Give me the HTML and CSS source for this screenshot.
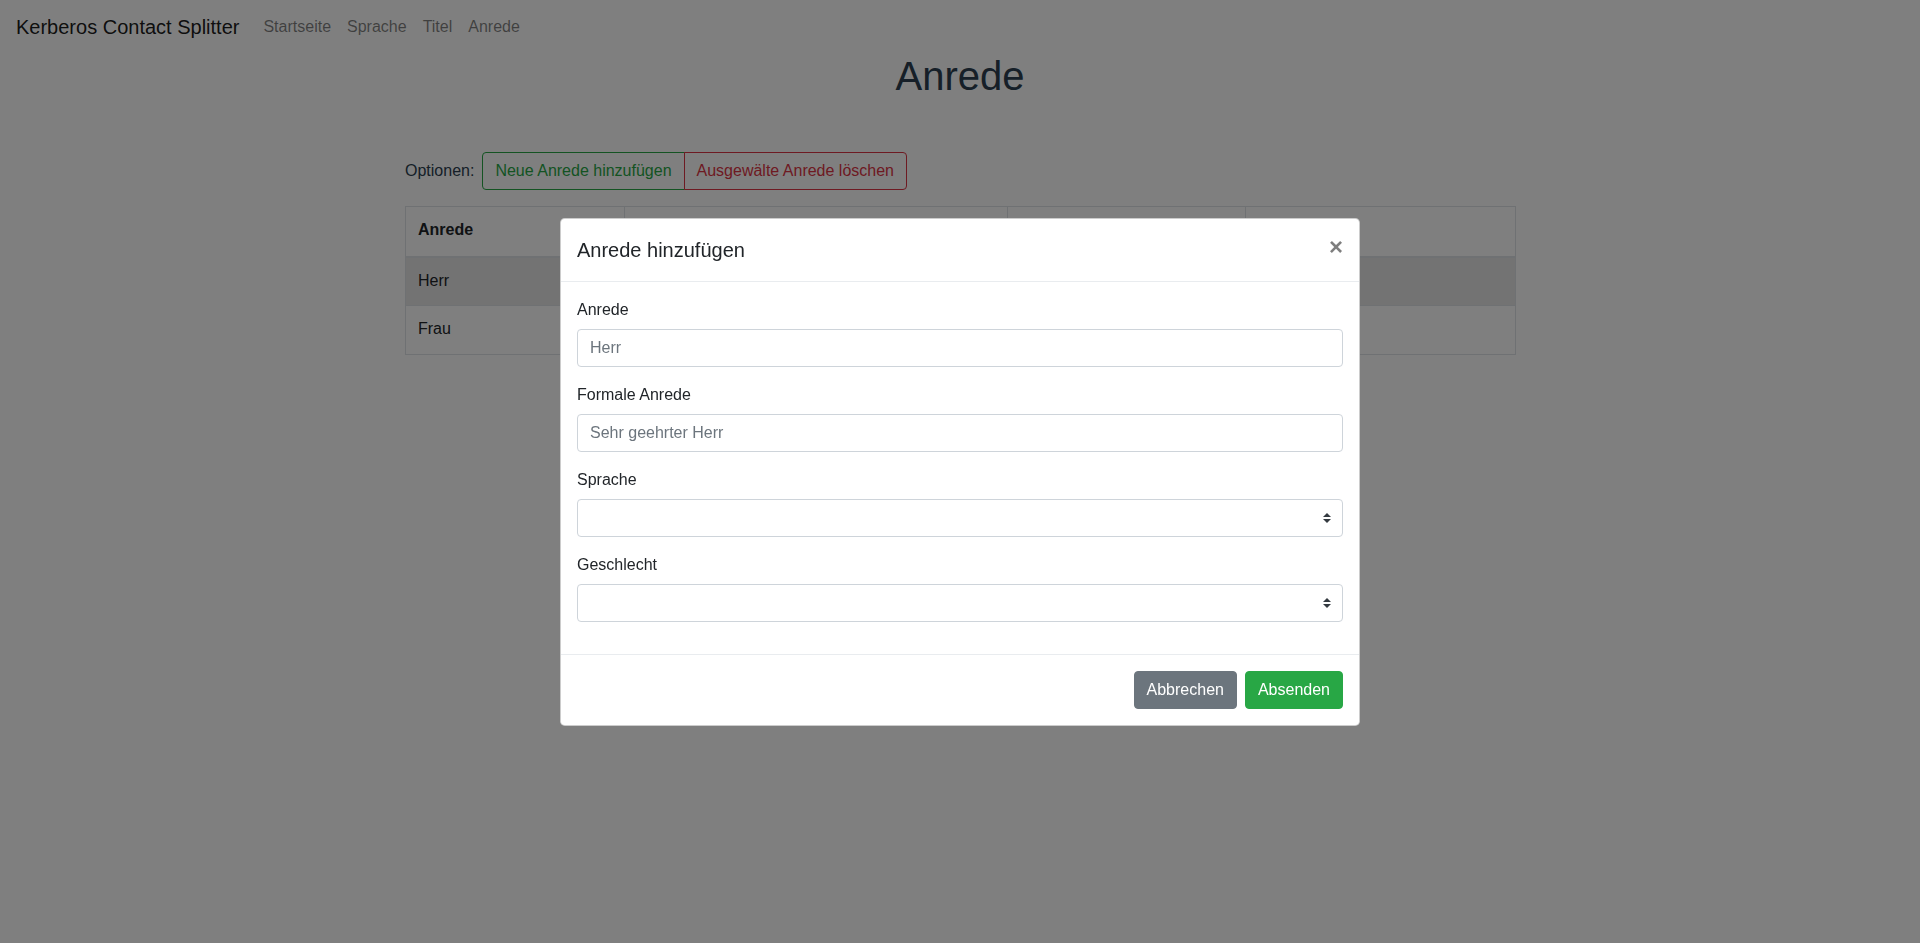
FILE: index.html
```html
<!DOCTYPE html>
<html lang="de">
<head>
<meta charset="utf-8">
<title>Kerberos Contact Splitter</title>
<link rel="stylesheet" href="styles.css">
</head>
<body>
<div class="app">
  <nav class="navbar">
    <a class="brand" href="#">Kerberos Contact Splitter</a>
    <ul class="nav">
      <li><a class="nav-link" href="#">Startseite</a></li>
      <li><a class="nav-link" href="#">Sprache</a></li>
      <li><a class="nav-link" href="#">Titel</a></li>
      <li><a class="nav-link" href="#">Anrede</a></li>
    </ul>
  </nav>
  <main class="container">
    <h1 class="page-title">Anrede</h1>
    <div class="options">
      <span class="options-label">Optionen:</span>
      <div class="btn-group">
        <button class="btn btn-outline-success" type="button">Neue Anrede hinzufügen</button>
        <button class="btn btn-outline-danger" type="button">Ausgewälte Anrede löschen</button>
      </div>
    </div>
    <table class="table">
      <colgroup>
        <col class="col-a"><col class="col-b"><col class="col-c"><col class="col-d">
      </colgroup>
      <thead>
        <tr><th>Anrede</th><th></th><th></th><th></th></tr>
      </thead>
      <tbody>
        <tr class="row-active"><td>Herr</td><td></td><td></td><td></td></tr>
        <tr><td>Frau</td><td></td><td></td><td></td></tr>
      </tbody>
    </table>
  </main>
</div>

<div class="backdrop"></div>

<div class="modal-wrap">
  <div class="modal" role="dialog">
    <header class="modal-header">
      <h5 class="modal-title">Anrede hinzufügen</h5>
      <button class="close" type="button" aria-label="Close">×</button>
    </header>
    <div class="modal-body">
      <div class="form-group">
        <label class="form-label">Anrede</label>
        <input class="form-control" type="text" placeholder="Herr">
      </div>
      <div class="form-group">
        <label class="form-label">Formale Anrede</label>
        <input class="form-control" type="text" placeholder="Sehr geehrter Herr">
      </div>
      <div class="form-group">
        <label class="form-label">Sprache</label>
        <div class="select-wrap">
          <select class="form-control custom-select"></select>
          <svg class="select-arrow" width="8" height="10" viewBox="0 0 4 5"><path d="M2 0L0 2h4zm0 5L0 3h4z" fill="#343a40"/></svg>
        </div>
      </div>
      <div class="form-group">
        <label class="form-label">Geschlecht</label>
        <div class="select-wrap">
          <select class="form-control custom-select"></select>
          <svg class="select-arrow" width="8" height="10" viewBox="0 0 4 5"><path d="M2 0L0 2h4zm0 5L0 3h4z" fill="#343a40"/></svg>
        </div>
      </div>
    </div>
    <footer class="modal-footer">
      <button class="btn btn-secondary" type="button">Abbrechen</button>
      <button class="btn btn-success" type="button">Absenden</button>
    </footer>
  </div>
</div>
</body>
</html>
```

FILE: styles.css
```css
* { box-sizing: border-box; }

html, body {
  margin: 0;
  padding: 0;
  background: #fff;
}

body {
  font-family: "Liberation Sans", Arial, sans-serif;
  font-size: 16px;
  line-height: 1.5;
  color: #212529;
}

/* Navbar */
.navbar {
  display: flex;
  align-items: center;
  height: 56px;
  padding: 7px 16px 9px;
}

.brand {
  font-size: 20px;
  line-height: 30px;
  padding: 5px 0;
  margin-right: 16px;
  color: rgba(0, 0, 0, 0.9);
  text-decoration: none;
  white-space: nowrap;
}

.nav {
  display: flex;
  list-style: none;
  margin: 0;
  padding: 0;
}

.nav-link {
  display: block;
  padding: 8px;
  color: rgba(0, 0, 0, 0.5);
  text-decoration: none;
}

/* Main */
.container {
  width: 1140px;
  margin: 0 auto;
  padding: 0 15px;
  color: #2c3e50;
}

.page-title {
  margin: 0 0 56px;
  font-size: 40px;
  line-height: 40px;
  font-weight: 500;
  text-align: center;
  color: #2c3e50;
}

.options {
  display: flex;
  align-items: center;
  margin-bottom: 16px;
}

.options-label {
  margin-right: 8px;
}

.btn-group {
  display: inline-flex;
}

.btn {
  display: inline-block;
  font-family: inherit;
  font-size: 16px;
  line-height: 24px;
  padding: 6px 12px;
  border: 1px solid transparent;
  border-radius: 4px;
  background: transparent;
  cursor: pointer;
  white-space: nowrap;
}

.btn-group .btn:first-child {
  border-top-right-radius: 0;
  border-bottom-right-radius: 0;
}

.btn-group .btn:last-child {
  margin-left: -1px;
  border-top-left-radius: 0;
  border-bottom-left-radius: 0;
}

.btn-outline-success {
  color: #28a745;
  border-color: #28a745;
}

.btn-outline-danger {
  color: #dc3545;
  border-color: #dc3545;
}

.btn-secondary {
  color: #fff;
  background: #6c757d;
  border-color: #6c757d;
}

.btn-success {
  color: #fff;
  background: #28a745;
  border-color: #28a745;
}

/* Table */
.table {
  width: 1110px;
  table-layout: fixed;
  border-collapse: collapse;
  color: #212529;
  text-align: left;
}

.col-a { width: 219px; }
.col-b { width: 383px; }
.col-c { width: 238px; }
.col-d { width: 270px; }

.table th,
.table td {
  height: 49px;
  padding: 11px 12px 12px;
  border: 1px solid #dee2e6;
  vertical-align: top;
  line-height: 24px;
}

.table thead th {
  height: 50px;
  border-bottom-width: 2px;
  font-weight: 700;
}

.row-active td {
  background: #e6e6e6;
}

/* Backdrop and modal */
.backdrop {
  position: fixed;
  inset: 0;
  background: rgba(0, 0, 0, 0.5);
}

.modal-wrap {
  position: fixed;
  inset: 0;
  display: flex;
  align-items: center;
  justify-content: center;
}

.modal {
  width: 800px;
  background: #fff;
  border: 1px solid rgba(0, 0, 0, 0.2);
  border-radius: 4.8px;
  color: #212529;
}

.modal-header {
  display: flex;
  align-items: flex-start;
  justify-content: space-between;
  padding: 16px;
  border-bottom: 1px solid #e9ecef;
}

.modal-title {
  margin: 0;
  font-size: 20px;
  line-height: 30px;
  font-weight: 500;
}

.close {
  margin: -16px -16px -16px auto;
  padding: 16px;
  font-family: inherit;
  font-size: 24px;
  font-weight: 700;
  line-height: 1;
  color: #000;
  text-shadow: 0 1px 0 #fff;
  opacity: 0.5;
  background: transparent;
  border: 0;
  cursor: pointer;
}

.modal-body {
  padding: 16px;
}

.form-group {
  margin-bottom: 16px;
}

.form-label {
  display: block;
  margin-bottom: 7px;
  line-height: 24px;
}

.form-control {
  display: block;
  width: 100%;
  height: 38px;
  padding: 6px 12px;
  font-family: inherit;
  font-size: 16px;
  line-height: 24px;
  color: #495057;
  background: #fff;
  border: 1px solid #ced4da;
  border-radius: 4px;
}

.form-control::placeholder {
  color: #6c757d;
  opacity: 1;
}

.custom-select {
  appearance: none;
  -webkit-appearance: none;
  padding-right: 28px;
}

.select-wrap {
  position: relative;
}

.select-arrow {
  position: absolute;
  right: 12px;
  top: 14px;
  pointer-events: none;
}

.modal-footer {
  display: flex;
  justify-content: flex-end;
  align-items: center;
  gap: 8px;
  padding: 16px;
  border-top: 1px solid #e9ecef;
}
```
